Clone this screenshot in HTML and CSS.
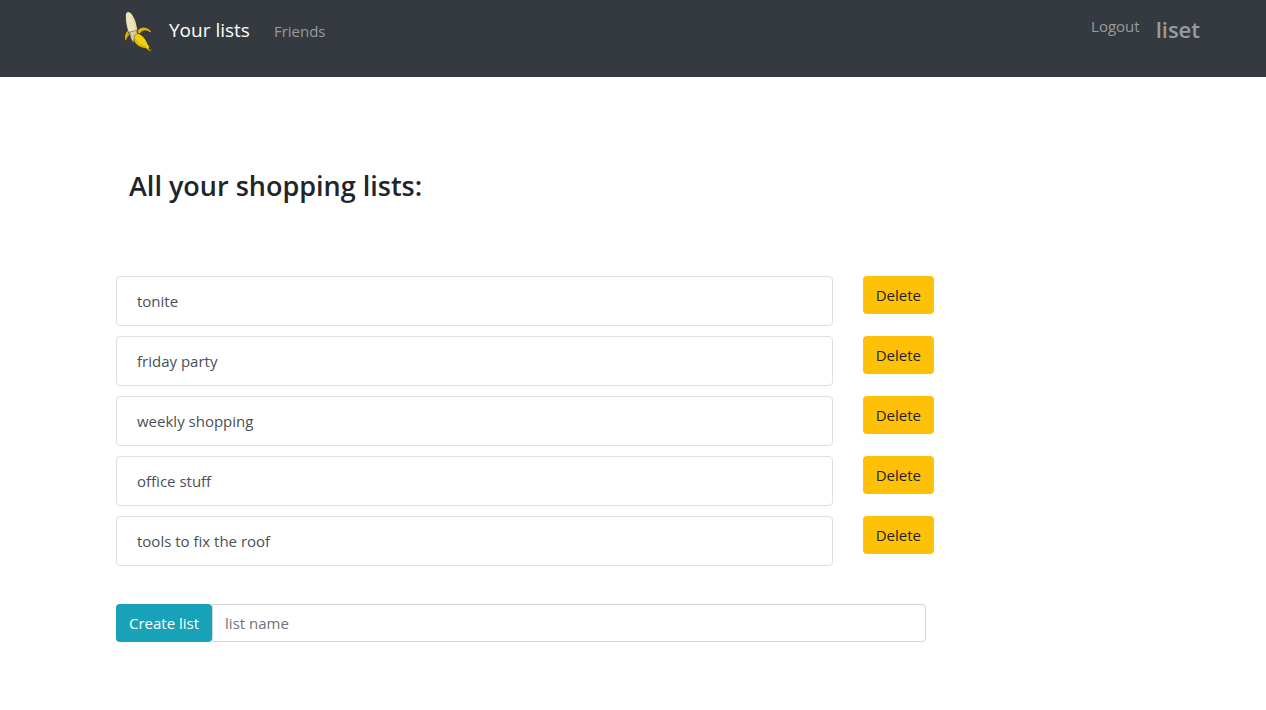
FILE: index.html
```html
<!DOCTYPE html>
<html lang="en">
<head>
<meta charset="utf-8">
<meta name="viewport" content="width=device-width, initial-scale=1">
<title>liset</title>
<link rel="stylesheet" href="styles.css">
</head>
<body>
<header class="navbar">
  <a class="logo" href="#" aria-label="Home">
    <svg viewBox="1 0 30 44" width="30" height="44" aria-hidden="true">
      <path d="M5 20C2 22 .8 26 2 31L3.500 31C4 28 5.500 25 8.500 24L7 20Z" fill="#cfae10" stroke="#20231d" stroke-width=".7"/>
      <path d="M14 21C18 15.500 24 16 28.500 21.500L27.500 22.800C23 19.500 19 20 16 25Z" fill="#d9b60b" stroke="#20231d" stroke-width=".7"/>
      <path d="M2.500 7C2 2 5 .500 8 3C11.500 7 14 13 14.500 21L6 24C3.500 18 2.500 12 2.500 7Z" fill="#efe5bd" stroke="#20231d" stroke-width=".6"/>
      <path d="M9 6C11 11 12 15 12.500 20" fill="none" stroke="#d8ca9a" stroke-width=".7"/>
      <path d="M11 23C17 22 23 28 25 34.500L29 39.500L27 41.500L23 38.500C16 38 10 33 10 26Z" fill="#f0ce0e" stroke="#20231d" stroke-width=".6"/>
      <path d="M6.500 22L13.500 20.500L14.500 23.500L11.500 25.500L10.500 33L8 29Z" fill="#d8ce9d" stroke="#4b4736" stroke-width=".5"/>
      <path d="M12 29C15 34 18 36 23 37" fill="none" stroke="#b99006" stroke-width=".8"/>
      <path d="M26 37.500L28 40" stroke="#42320d" stroke-width="2"/>
    </svg>
  </a>
  <nav class="nav-main">
    <a class="nav-current" href="#">Your lists</a>
    <a class="nav-link" href="#">Friends</a>
  </nav>
  <div class="nav-account">
    <a class="nav-link" href="#">Logout</a>
    <span class="username">liset</span>
  </div>
</header>
<main class="page">
  <h1 class="title">All your shopping lists:</h1>
  <ul class="lists">
    <li class="list-row"><a class="list-name" href="#">tonite</a><button class="button button-delete" type="button">Delete</button></li>
    <li class="list-row"><a class="list-name" href="#">friday party</a><button class="button button-delete" type="button">Delete</button></li>
    <li class="list-row"><a class="list-name" href="#">weekly shopping</a><button class="button button-delete" type="button">Delete</button></li>
    <li class="list-row"><a class="list-name" href="#">office stuff</a><button class="button button-delete" type="button">Delete</button></li>
    <li class="list-row"><a class="list-name" href="#">tools to fix the roof</a><button class="button button-delete" type="button">Delete</button></li>
  </ul>
  <form class="create-form">
    <button class="button button-create" type="submit">Create list</button>
    <input class="create-input" type="text" placeholder="list name" aria-label="list name">
  </form>
</main>
</body>
</html>
```
FILE: styles.css
```css
* {
  box-sizing: border-box;
}

body {
  margin: 0;
  background: #fff;
  color: #212529;
  font-family: "Open Sans", "Noto Sans", sans-serif;
  font-size: 15px;
  line-height: 24px;
}

a {
  text-decoration: none;
}

.navbar {
  display: flex;
  align-items: flex-start;
  min-height: 77px;
  padding: 10px 66px 16px 124px;
  background: #343a40;
}

.logo {
  display: flex;
  margin-right: 15px;
}

.nav-main {
  display: flex;
  align-items: baseline;
  gap: 24px;
  padding-top: 5px;
}

.nav-current {
  color: #fff;
  font-size: 19px;
  line-height: 30px;
}

.nav-link {
  color: #999c9f;
}

.nav-account {
  display: flex;
  gap: 16px;
  margin-left: auto;
  padding-top: 4px;
}

.username {
  color: #999c9f;
  font-size: 22px;
  font-weight: 600;
  line-height: 30px;
}

.page {
  padding: 92px 45px 40px 101px;
}

.title {
  margin: 0;
  padding-left: 28px;
  font-size: 27px;
  font-weight: 600;
  line-height: 34px;
}

.lists {
  display: flex;
  flex-direction: column;
  gap: 10px;
  margin: 73px 0 38px;
  padding: 0;
  list-style: none;
}

.list-row {
  display: grid;
  grid-template-columns: 2fr 1fr;
  align-items: start;
}

.list-name {
  margin: 0 15px;
  padding: 12px 20px;
  border: 1px solid #dfdfdf;
  border-radius: 4px;
  color: #495057;
}

.button {
  padding: 6px 12px;
  border: 1px solid transparent;
  border-radius: 4px;
  font: inherit;
  white-space: nowrap;
}

.button-delete {
  justify-self: start;
  margin-left: 15px;
  background: #ffc107;
  color: #212529;
}

.button-create {
  background: #17a2b8;
  color: #fff;
}

.create-form {
  display: flex;
  width: 75%;
  padding: 0 15px;
}

.create-input {
  flex: 1;
  min-width: 0;
  padding: 6px 12px;
  border: 1px solid #ced4da;
  border-radius: 0 4px 4px 0;
  background: #fff;
  color: #495057;
  font: inherit;
}

.create-input::placeholder {
  color: #6c757d;
  opacity: 1;
}
```
